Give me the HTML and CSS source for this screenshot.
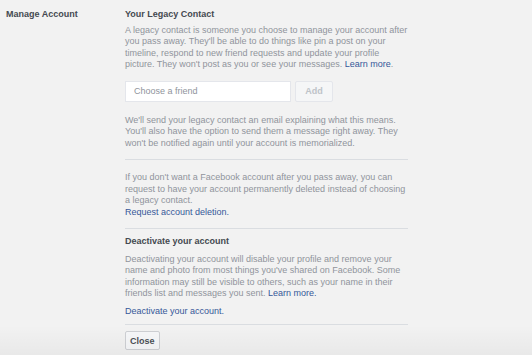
FILE: index.html
```html
<!DOCTYPE html>
<html lang="en">
<head>
    <meta charset="UTF-8" />
    <title>Manage Account</title>
    <link rel="stylesheet" href="styles.css">
</head>
<body>
    <div class="settings-row">
        <div class="row-label">Manage Account</div>
        <div class="row-content">
            <div class="block">
                <h3>Your Legacy Contact</h3>
                <p>A legacy contact is someone you choose to manage your account after you pass away. They'll be able to do things like pin a post on your timeline, respond to new friend requests and update your profile picture. They won't post as you or see your messages. <a href="#">Learn more</a>.</p>
                <div class="friend-picker">
                    <input type="text" class="friend-input" placeholder="Choose a friend" />
                    <button class="add-btn" disabled>Add</button>
                </div>
                <p>We'll send your legacy contact an email explaining what this means. You'll also have the option to send them a message right away. They won't be notified again until your account is memorialized.</p>
            </div>

            <div class="block deletion">
                <p>If you don't want a Facebook account after you pass away, you can request to have your account permanently deleted instead of choosing a legacy contact.<br><a href="#">Request account deletion.</a></p>
            </div>

            <div class="block deactivate">
                <h3>Deactivate your account</h3>
                <p>Deactivating your account will disable your profile and remove your name and photo from most things you've shared on Facebook. Some information may still be visible to others, such as your name in their friends list and messages you sent. <a href="#">Learn more.</a></p>
                <p class="link-line"><a href="#">Deactivate your account.</a></p>
            </div>

            <button class="close-btn">Close</button>
        </div>
    </div>
    <div class="bottom-fade"></div>
</body>
</html>
```

FILE: styles.css
```css
body {
    margin: 0;
    height: 355px;
    overflow: hidden;
    font-family: 'Liberation Sans', Arial, sans-serif;
    font-size: 9px;
    line-height: 11.5px;
    color: #90949c;
    background-color: #f2f2f2;
}

.settings-row {
    display: flex;
    padding-top: 9px;
}

.row-label {
    width: 119px;
    padding-left: 6px;
    font-weight: bold;
    color: #444950;
}

.row-content {
    width: 283px;
}

.block {
    border-bottom: 1px solid #dadde1;
    padding-bottom: 10px;
    margin-bottom: 12px;
}

.block h3 {
    margin: 0 0 4px;
    font-size: 9px;
    line-height: 11.5px;
    color: #444950;
}

.block p {
    margin: 0;
}

a {
    color: #365899;
    text-decoration: none;
}

.friend-picker {
    display: flex;
    gap: 4px;
    margin: 10px 0 13px;
}

.friend-input {
    width: 166px;
    height: 21px;
    box-sizing: border-box;
    border: 1px solid #e4e6eb;
    background: #fff;
    padding: 0 8px;
    font-family: inherit;
    font-size: 9px;
    outline: none;
}

.friend-input::placeholder {
    color: #90949c;
}

.add-btn {
    width: 38px;
    height: 21px;
    border: 1px solid #e4e6eb;
    background: #f5f6f7;
    color: #bec3c9;
    font-family: inherit;
    font-size: 9px;
    font-weight: bold;
    border-radius: 2px;
}

.deletion {
    padding-bottom: 10px;
    margin-bottom: 7px;
}

.deactivate {
    padding-bottom: 7px;
    margin-bottom: 6px;
}

.deactivate h3 {
    margin-bottom: 6px;
}

.link-line {
    margin-top: 6px !important;
}

.close-btn {
    height: 19px;
    padding: 0 4px;
    border: 1px solid #ced0d4;
    background: #f6f7f9;
    color: #4b4f56;
    font-family: inherit;
    font-size: 9px;
    font-weight: bold;
    border-radius: 2px;
}

.bottom-fade {
    position: absolute;
    left: 0;
    right: 0;
    bottom: 0;
    height: 30px;
    background: linear-gradient(rgba(0, 0, 0, 0), rgba(0, 0, 0, 0.04));
    pointer-events: none;
}
```
